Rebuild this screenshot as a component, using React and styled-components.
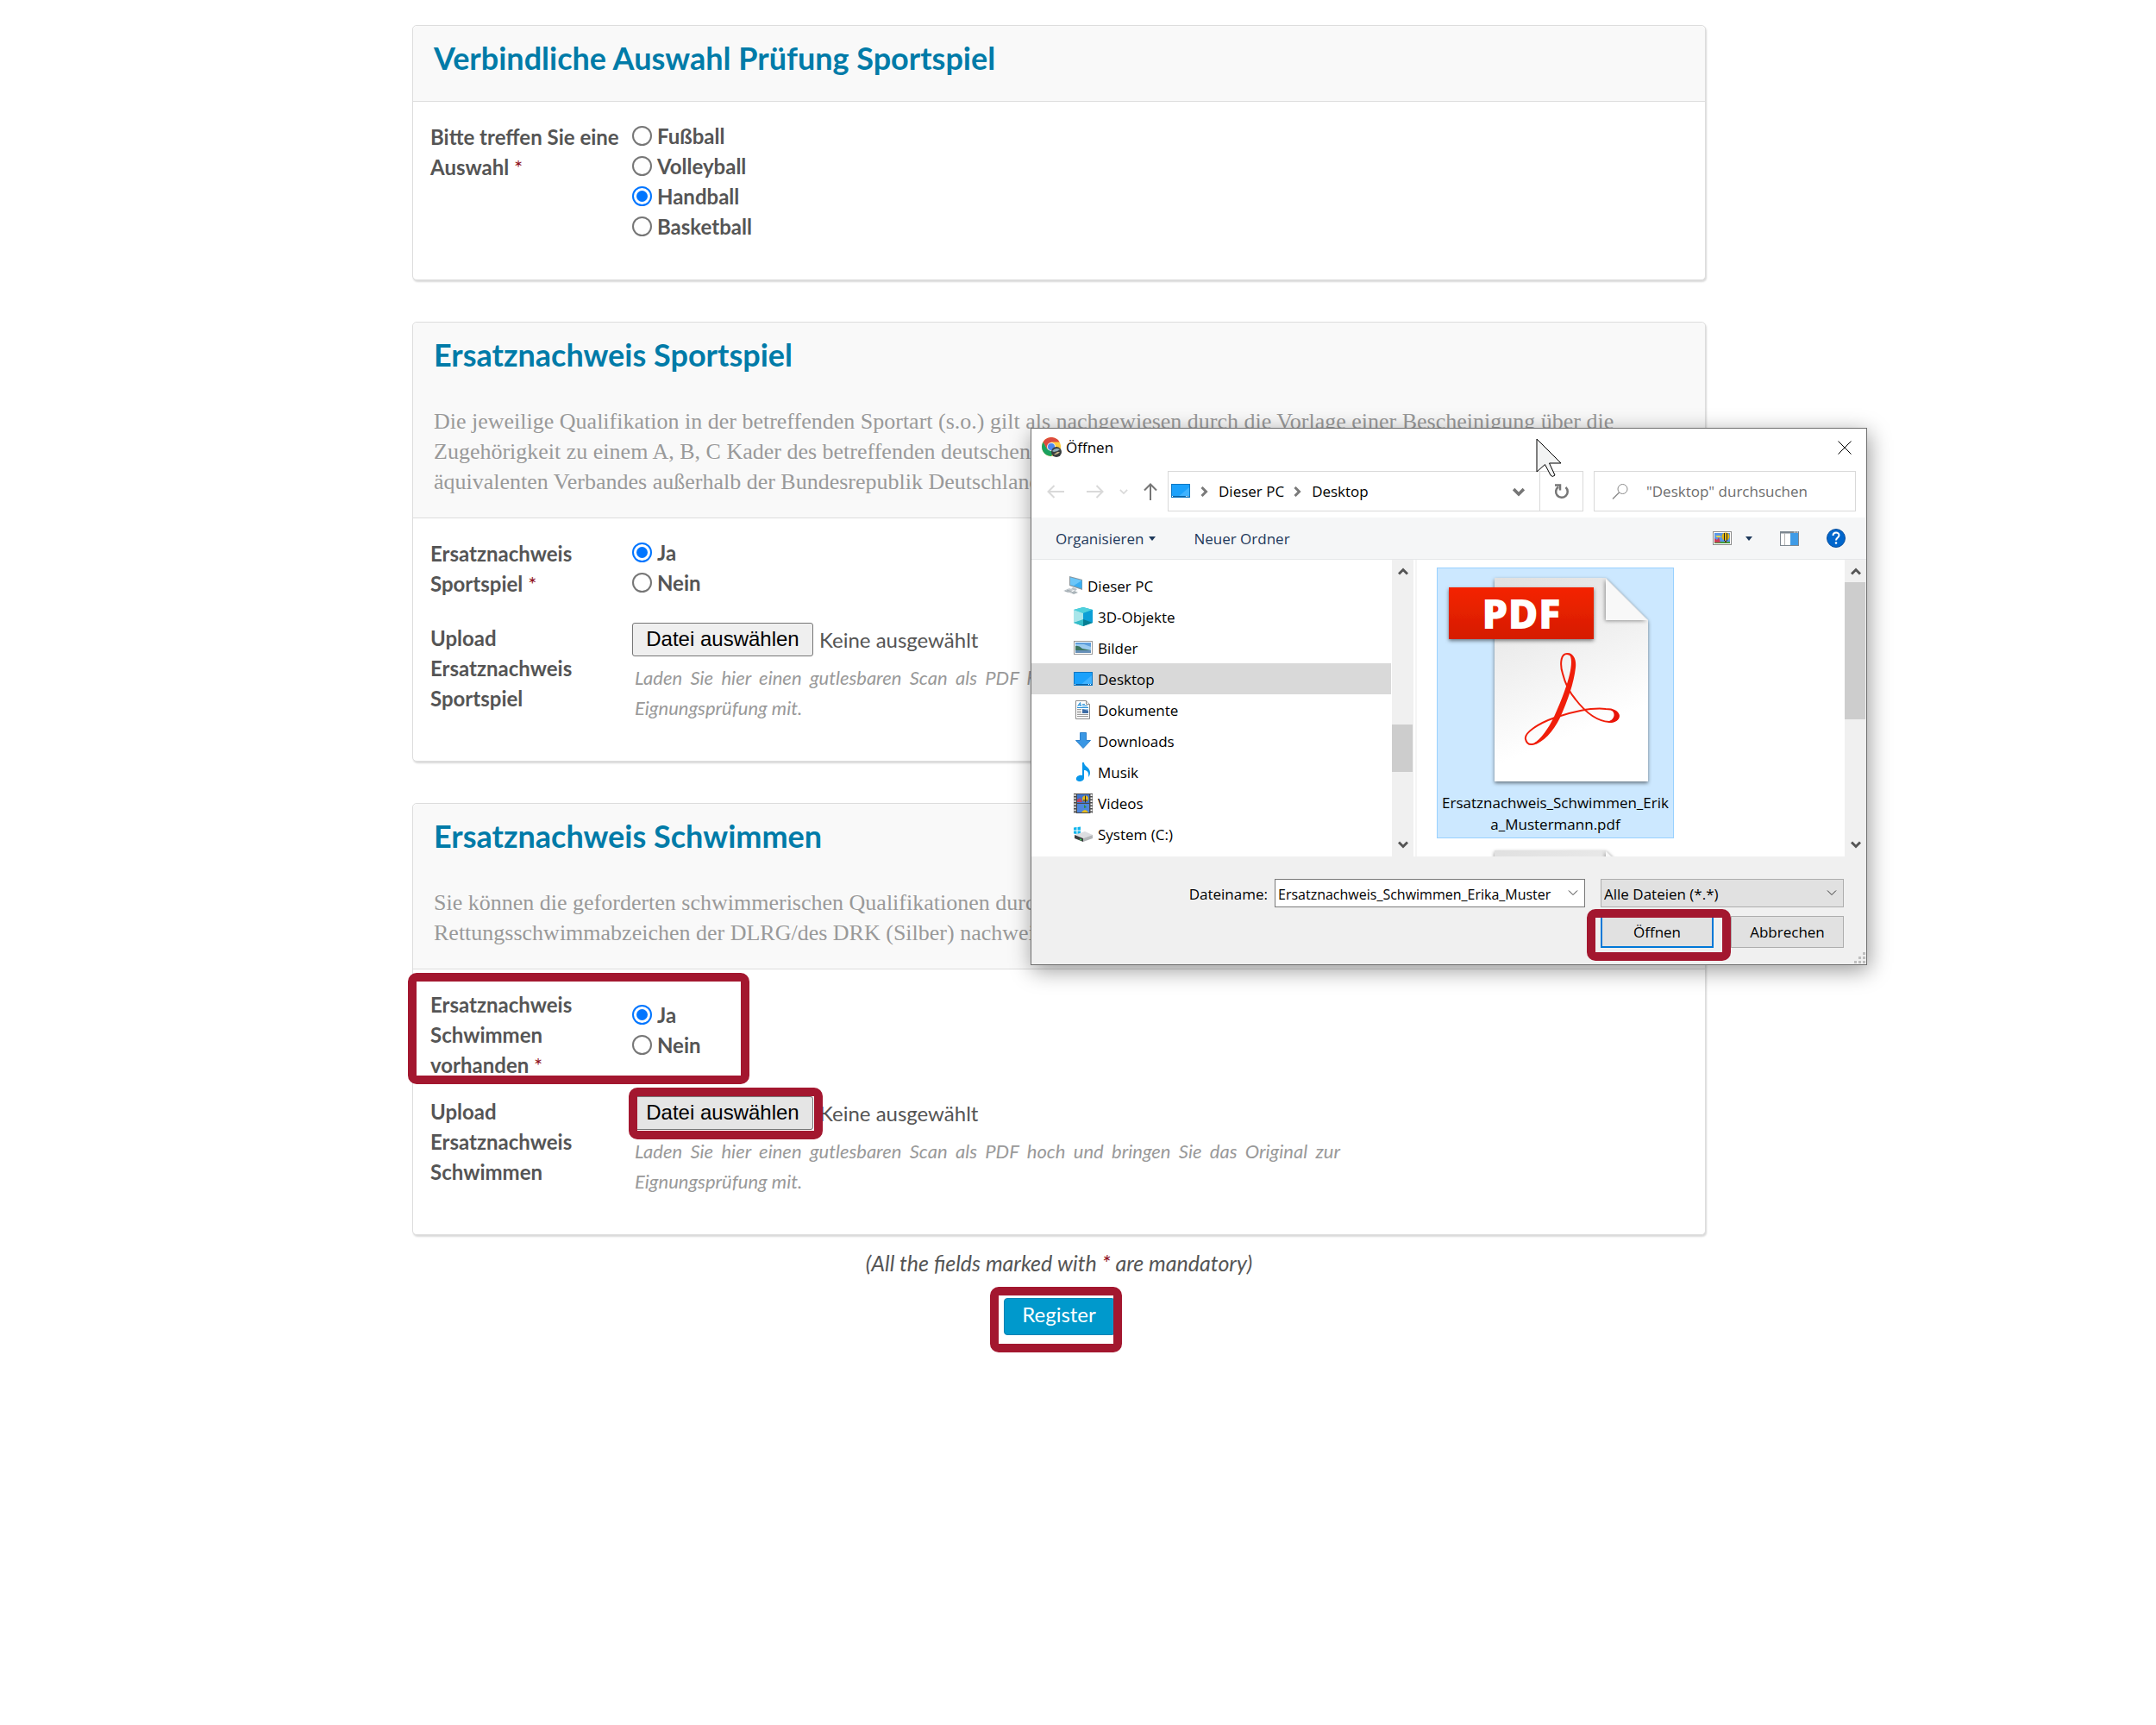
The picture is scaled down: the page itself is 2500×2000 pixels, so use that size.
import React, { useRef, useState } from "react";
import styled, { createGlobalStyle } from "styled-components";

const GlobalStyle = createGlobalStyle`
  * {
    box-sizing: border-box;
  }

  body {
    margin: 0;
    background: #ffffff;
    color: #555555;
    font-family: Lato, "Open Sans", sans-serif;
    font-size: 24px;
    line-height: 35px;
  }

  svg {
    display: block;
    flex-shrink: 0;
  }
`;

const Page = styled.div`
  padding: 29px 44px 64px 0;
`;

const Workspace = styled.form`
  position: relative;
  max-width: 1500px;
  margin: 0 auto;
`;

const Card = styled.section`
  margin-bottom: 48px;
  border: 1px solid #dddddd;
  border-radius: 5px;
  background: #ffffff;
  box-shadow: 1px 2px 2px rgba(0, 0, 0, 0.15);

  &:last-of-type {
    margin-bottom: 15px;
  }
`;

const CardHeader = styled.header`
  min-height: 88px;
  padding: 15px 24px 24px;
  border-bottom: 1px solid #dddddd;
  background: #f9f9f9;
  border-radius: 5px 5px 0 0;
`;

const CardTitle = styled.h2`
  margin: 0;
  color: #007ba8;
  font-size: 36px;
  font-weight: 700;
  line-height: 44px;
`;

const CardText = styled.p`
  margin: 38px 0 0;
  color: #999999;
  font-family: "Liberation Serif", "Times New Roman", serif;
  font-size: 26px;
`;

const CardBody = styled.div`
  padding: 22px 20px 44px;
`;

const FieldRow = styled.div`
  position: relative;
  display: grid;
  grid-template-columns: 224px 1fr;
  column-gap: 10px;
  margin-bottom: ${(props) => props.$space || 0}px;
`;

const FieldLabel = styled.div`
  padding-top: 1px;
  font-weight: 700;
`;

const Required = styled.span`
  color: #8f1020;
  font-weight: 400;
`;

const RadioList = styled.div`
  display: flex;
  flex-direction: column;
  padding-top: ${(props) => (props.$lowered ? 13 : 0)}px;
`;

const RadioOption = styled.label`
  display: flex;
  align-items: center;
  gap: 6px;
  font-weight: 700;
`;

const Radio = styled.input`
  appearance: none;
  display: grid;
  place-content: center;
  width: 23px;
  height: 23px;
  margin: 0;
  border: 2px solid #767676;
  border-radius: 50%;
  background: #ffffff;

  &:checked {
    border-color: #0075ff;
  }

  &:checked::before {
    content: "";
    width: 13px;
    height: 13px;
    border-radius: 50%;
    background: #0075ff;
  }
`;

const FilePicker = styled.div`
  position: relative;
  display: flex;
  align-items: center;
  gap: 7px;
  height: 40px;
`;

const HiddenFile = styled.input`
  display: none;
`;

const FileButton = styled.button`
  width: 210px;
  height: 39px;
  padding: 0;
  border: 1px solid #767676;
  border-radius: 3px;
  background: ${(props) => (props.$hovered ? "#e5e5e5" : "#efefef")};
  color: #000000;
  font-family: "Liberation Sans", Arial, sans-serif;
  font-size: 24px;
`;

const Hint = styled.p`
  max-width: 821px;
  margin: 7px 0 0;
  padding-left: 3px;
  color: #999999;
  font-size: 22px;
  font-style: italic;
  text-align: justify;
`;

// Red marker drawn over the steps the applicant has to follow
const Highlight = styled.div`
  position: absolute;
  top: ${(props) => props.$top}px;
  left: ${(props) => props.$left}px;
  width: ${(props) => props.$width}px;
  height: ${(props) => props.$height}px;
  border: 10px solid #a3172f;
  border-radius: 10px;
  pointer-events: none;
`;

const Footer = styled.footer`
  display: flex;
  flex-direction: column;
  align-items: center;
  gap: 23px;
`;

const Mandatory = styled.p`
  margin: 0;
  font-size: 25px;
  font-style: italic;
`;

const SubmitWrap = styled.div`
  position: relative;
`;

const SubmitButton = styled.button`
  display: block;
  width: 129px;
  height: 43px;
  padding: 0 0 6px;
  border: 1px solid #0082b3;
  border-radius: 4px;
  background: #0099cc;
  color: #ffffff;
  font-family: inherit;
  font-size: 24px;
`;

const Dialog = styled.div`
  position: absolute;
  top: 467px;
  left: 717px;
  width: 970px;
  border: 1px solid #707070;
  background: #ffffff;
  box-shadow: 2px 6px 24px rgba(0, 0, 0, 0.4);
  color: #000000;
  font-family: "Open Sans", "Noto Sans", sans-serif;
  font-size: 17px;
  line-height: 25px;

  button,
  input,
  select {
    font-family: inherit;
    font-size: inherit;
  }
`;

const TitleBar = styled.div`
  display: flex;
  align-items: center;
  gap: 5px;
  height: 43px;
  padding: 0 17px 0 12px;
`;

const IconButton = styled.button`
  display: flex;
  align-items: center;
  justify-content: center;
  padding: 0;
  border: none;
  background: none;
`;

const CloseButton = styled(IconButton)`
  margin-left: auto;
`;

const NavBar = styled.div`
  display: flex;
  align-items: center;
  padding: 6px 12px 7px 18px;
`;

const NavButtons = styled.div`
  display: grid;
  grid-template-columns: 46px 38px 28px 28px;
  justify-items: start;
  align-items: center;
`;

const AddressBar = styled.div`
  display: flex;
  align-items: center;
  flex: 1;
  height: 47px;
  margin-right: 12px;
  padding-left: 3px;
  border: 1px solid #d9d9d9;
`;

const CrumbArrow = styled.span`
  margin: 0 11px 0 9px;
`;

const AddressToggle = styled(IconButton)`
  margin: 0 17px 0 auto;
`;

const RefreshButton = styled(IconButton)`
  width: 50px;
  height: 100%;
  border-left: 1px solid #d9d9d9;
`;

const SearchBox = styled.div`
  display: flex;
  align-items: center;
  gap: 20px;
  width: 304px;
  height: 47px;
  padding-left: 20px;
  border: 1px solid #d9d9d9;
`;

const SearchInput = styled.input`
  flex: 1;
  min-width: 0;
  padding: 0;
  border: none;
  outline: none;

  &::placeholder {
    color: #6d6d6d;
    opacity: 1;
  }
`;

const ToolBar = styled.div`
  display: flex;
  align-items: center;
  height: 49px;
  padding: 0 24px 0 28px;
  border-bottom: 1px solid #e5e7e9;
  background: #f5f6f7;
`;

const ToolButton = styled(IconButton)`
  gap: 6px;
  margin-right: 44px;
  color: #1e395b;
`;

const ToolIcons = styled.div`
  display: flex;
  align-items: center;
  gap: 32px;
  margin-left: auto;
`;

const ViewButton = styled(IconButton)`
  gap: 16px;
`;

const Browser = styled.div`
  display: flex;
  height: 344px;
`;

const Tree = styled.ul`
  width: 417px;
  margin: 0;
  padding: 12px 0 0;
  list-style: none;
  overflow: hidden;
`;

const TreeItem = styled.li`
  display: flex;
  align-items: center;
  gap: 5px;
  height: 36px;
  padding-left: ${(props) => (props.$root ? 37 : 49)}px;
  background: ${(props) => (props.$active ? "#d9d9d9" : "transparent")};
`;

const ScrollBar = styled.div`
  display: flex;
  flex-direction: column;
  align-items: center;
  justify-content: space-between;
  position: relative;
  width: 25px;
  margin-left: 1px;
  padding: 8px 0;
  background: #f0f0f0;
`;

const ScrollThumb = styled.div`
  position: absolute;
  top: ${(props) => props.$top}px;
  left: 0;
  right: 1px;
  height: ${(props) => props.$height}px;
  background: #cdcdcd;
`;

const Files = styled.div`
  display: flex;
  flex-direction: column;
  gap: 2px;
  flex: 1;
  margin-left: 2px;
  padding: 9px 0 0 23px;
  border-left: 2px solid #f5f5f5;
  overflow: hidden;
`;

const FileTile = styled.div`
  flex-shrink: 0;
  width: 275px;
  height: 314px;
  padding: 7px 4px;
  border: 1px solid ${(props) => (props.$selected ? "#99d1ff" : "transparent")};
  background: ${(props) => (props.$selected ? "#cce8ff" : "transparent")};
  text-align: center;
  word-break: break-all;
`;

const DialogFooter = styled.div`
  position: relative;
  display: grid;
  grid-template-columns: 1fr 360px 282px;
  column-gap: 18px;
  row-gap: 10px;
  padding: 26px 26px 19px 0;
  background: #f0f0f0;
`;

const NameLabel = styled.label`
  margin-right: -10px;
  padding-top: 5px;
  text-align: right;
`;

const Combo = styled.div`
  position: relative;
  height: 33px;

  svg {
    position: absolute;
    top: 10px;
    right: 8px;
    pointer-events: none;
  }
`;

const NameInput = styled.input`
  width: 100%;
  height: 100%;
  padding: 2px 26px 0 3px;
  border: 1px solid #7a7a7a;
  background: #ffffff;
  color: #000000;

  && {
    font-size: 16px;
  }
`;

const TypeSelect = styled.select`
  appearance: none;
  width: 100%;
  height: 100%;
  padding: 1px 26px 0 3px;
  border: 1px solid #adadad;
  border-radius: 0;
  background: #e1e1e1;
  color: #000000;
`;

const Actions = styled.div`
  position: relative;
  grid-column: 3;
  display: flex;
  justify-content: space-between;
`;

const ActionButton = styled.button`
  width: 131px;
  height: 37px;
  padding: 0;
  border: ${(props) =>
    props.$primary ? "2px solid #0078d7" : "1px solid #adadad"};
  background: #e1e1e1;
  color: #000000;
`;

const Grip = styled.div`
  position: absolute;
  right: 1px;
  bottom: 1px;
`;

const Pointer = styled.div`
  position: absolute;
  top: 11px;
  left: 585px;
  pointer-events: none;
`;

const Chevron = ({ dir = "down", size = 12, color = "#555", width = 2 }) => {
  const paths = {
    down: "M1 3.5 6 8.5 11 3.5",
    up: "M1 8.5 6 3.5 11 8.5",
    right: "M3.5 1 8.5 6 3.5 11"
  };
  return (
    <svg width={size} height={size} viewBox="0 0 12 12" fill="none">
      <path d={paths[dir]} stroke={color} strokeWidth={width} />
    </svg>
  );
};

const Caret = () => (
  <svg width="8" height="5" viewBox="0 0 8 5">
    <path d="M0 0h8L4 5z" fill="#1e395b" />
  </svg>
);

const ChromeIcon = () => (
  <svg width="23" height="23" viewBox="0 0 23 23">
    <circle cx="11" cy="11" r="11" fill="#ffcd40" />
    <path d="M1.5 5.5A11 11 0 0 1 20.6 5.5H11L6.3 13.8z" fill="#dd4b3e" />
    <path d="M1.5 5.5A11 11 0 0 0 11 22l4.7-8.2H6.3z" fill="#1aa15f" />
    <circle cx="11" cy="11" r="5" fill="#f1f1f1" />
    <circle cx="11" cy="11" r="4" fill="#4a87ee" />
    <circle cx="17" cy="17" r="6" fill="#3a3f40" />
    <path d="M12 16q4-5 9-2l-3 2-4 1z" fill="#8fb0bd" />
    <path d="M14 20q4 1 7-3l-3 0z" fill="#c9b58b" />
  </svg>
);

const DesktopIcon = () => (
  <svg width="23" height="17" viewBox="0 0 23 17">
    <rect x="0.5" y="0.5" width="21" height="15" fill="#1ba1fb" stroke="#0f78c4" />
    <path d="M8 15 21 4v11z" fill="#3fb2ff" />
    <path d="M1 14.5h20" stroke="#0b62a4" />
    <path d="M1 14.5h1M17 14.5h1M19 14.5h1" stroke="#fff" />
  </svg>
);

const PcIcon = () => (
  <svg width="23" height="22" viewBox="0 0 23 22">
    <path d="M7 0 22 4v12L7 11z" fill="#8a979f" />
    <path d="M8 1.5 21.5 5v9.5L8 10z" fill="#3aaef2" />
    <path d="M8 1.5 21.5 5 12 11 8 10z" fill="#6cc6f8" />
    <path d="M11 13l5 2-2 2-5-2z" fill="#b9c2c8" />
    <path d="M0 17l7-3 5 2-7 3z" fill="#c5ccd1" />
    <path d="M8 19l5-2 4 2-5 2z" fill="#aab4ba" />
    <path d="M2 17l7 2M4 16l6 2" stroke="#8f9aa1" strokeWidth="0.7" />
  </svg>
);

const CubeIcon = () => (
  <svg width="23" height="22" viewBox="0 0 23 22">
    <path d="M11 0 22 3v15l-11 4L0 18V3z" fill="#17b5cf" />
    <path d="M11 0 22 3 11 7 0 3z" fill="#4fd0dc" />
    <path d="M0 3l11 4v8L0 18z" fill="#a9e6ea" />
    <path d="M0 18l11-4v8z" fill="#36bdc9" />
    <path d="M22 3 11 7v8l11 3z" fill="#0c9fd6" />
    <path d="M11 14l11 4-11 4z" fill="#067e93" />
  </svg>
);

const ImageIcon = () => (
  <svg width="23" height="16" viewBox="0 0 23 16">
    <rect x="0.5" y="0.5" width="21" height="15" fill="#fff" stroke="#999" />
    <rect x="2" y="2" width="18" height="12" fill="#9ccbf0" />
    <path d="M2 4h10l8 3V2H2z" fill="#5f9fdd" />
    <path d="M2 6q4-1 8 3l10 2v1H2z" fill="#3c7560" />
    <path d="M2 11h18v3H2z" fill="#6790b8" />
  </svg>
);

const DocIcon = () => (
  <svg width="23" height="22" viewBox="0 0 23 22">
    <path d="M2.5.5h12l4 4v17h-16z" fill="#fff" stroke="#8b8b8b" />
    <path d="M14.5.5v4h4" fill="#eee" stroke="#8b8b8b" />
    <path d="M4.5 7 7.5 2.5 8.5 7M5.5 5.5h3" fill="none" stroke="#1c8ad6" />
    <path d="M10 4.5h3M10 6.5h6M4 8.5h13" stroke="#1c8ad6" />
    <path d="M4 10.5h5M4 12.5h5M4 14.5h5M4 16.5h13M4 18.5h13" stroke="#999" />
    <rect x="10" y="10" width="7" height="5" fill="#3f6da5" />
    <path d="M10 10h7v2z" fill="#9cc4ea" />
  </svg>
);

const DownloadIcon = () => (
  <svg width="23" height="22" viewBox="0 0 23 22">
    <path
      d="M7.5 1.5h7v9h5L11 19.5 2.5 10.5h5z"
      fill="#3a97e4"
      stroke="#2a80cc"
    />
  </svg>
);

const MusicIcon = () => (
  <svg width="23" height="22" viewBox="0 0 23 22">
    <path
      d="M10 0h2c0 5 7 5 7 12 0 2-1 4-2 5 1-6-2-8-5-8v9c0 5-8 5-9 2-1-4 4-6 7-5z"
      fill="#0a97ea"
    />
  </svg>
);

const VideoIcon = () => (
  <svg width="23" height="23" viewBox="0 0 23 23">
    <rect width="22" height="23" fill="#4b4b4b" />
    <path
      d="M1.5 1v22M20.5 1v22"
      stroke="#fff"
      strokeWidth="2"
      strokeDasharray="2 1.5"
    />
    <rect x="4" y="1" width="14" height="10" fill="#3f74cf" />
    <rect x="4" y="12" width="14" height="10" fill="#4e86dd" />
    <circle cx="13.5" cy="6" r="3.5" fill="#e5b81e" />
    <path d="M13.5 2.5v8M11 8h5" stroke="#2b2b20" />
    <path d="M4 7l4-2 2 5H4z" fill="#c2435d" />
    <path d="M9 22q4-6 8 0z" fill="#e8bd1b" />
    <path d="M12 13l3 3-3 1z" fill="#2d8f3d" />
  </svg>
);

const DriveIcon = () => (
  <svg width="23" height="20" viewBox="0 0 23 20">
    <path
      d="M0 2.5 3.5 2v3.5H0zM4.5 2 8 1.5v4H4.5zM0 6.5h3.5V10L0 9.5zM4.5 6.5H8v4L4.5 10z"
      fill="#12b5ec"
    />
    <path d="M1 11 13 7l9 4-11 4z" fill="#dcdde0" />
    <path d="M11 15l11-4v4l-11 4z" fill="#b3b5b8" />
    <path d="M1 11l10 4v4L1 15z" fill="#3b3d40" />
    <path d="M7 16l2 1" stroke="#39d353" strokeWidth="1.5" />
  </svg>
);

const ViewIcon = () => (
  <svg width="22" height="16" viewBox="0 0 22 16">
    <rect x="0.5" y="0.5" width="21" height="15" fill="#fff" stroke="#8c8c8c" />
    <rect x="2" y="2" width="18" height="12" fill="#5a96e8" />
    <path d="M2 12h18v2H2z" fill="#3f9c3f" />
    <path d="M2 8l3 2 2-3 2 6H2z" fill="#c93f57" />
    <path d="M3 5h5l2 2H5z" fill="#e8d64a" />
    <circle cx="15" cy="6" r="4.5" fill="#e5b70d" />
    <path d="M13.5 2v9M16.5 2v9" stroke="#222" />
    <rect x="14" y="11" width="2" height="2" fill="#6b3d12" />
  </svg>
);

const PaneIcon = () => (
  <svg width="22" height="17" viewBox="0 0 22 17">
    <rect x="0.5" y="0.5" width="21" height="16" fill="#fff" stroke="#7d8790" />
    <path d="M0 1.5h22" stroke="#7d8790" strokeWidth="2" />
    <path d="M16 1h1M18 1h1M20 1h1" stroke="#fff" />
    <path d="M5.5 2v14" stroke="#b5b5b5" />
    <rect x="12" y="2" width="9" height="14" fill="#3f9be6" />
  </svg>
);

const HelpIcon = () => (
  <svg width="22" height="22" viewBox="0 0 22 22">
    <circle cx="11" cy="11" r="10.5" fill="#0066cc" stroke="#0a4f9c" />
    <path
      d="M7.5 8c0-4.5 7-4.5 7-.5 0 3-3.5 3-3.5 6"
      fill="none"
      stroke="#fff"
      strokeWidth="2"
    />
    <circle cx="11" cy="16.5" r="1.3" fill="#fff" />
  </svg>
);

const FileIcon = ({ children }) => (
  <svg width="265" height="252" viewBox="-4 0 265 252">
    <defs>
      <linearGradient id="sheet" x1="0" y1="0" x2="0.3" y2="1">
        <stop offset="0" stopColor="#e0e0e0" />
        <stop offset="0.5" stopColor="#f2f2f2" />
        <stop offset="0.85" stopColor="#ffffff" />
      </linearGradient>
      <linearGradient id="banner" x1="0" y1="0" x2="0" y2="1">
        <stop offset="0" stopColor="#f42400" />
        <stop offset="1" stopColor="#d51c00" />
      </linearGradient>
      <filter id="drop" x="-20%" y="-20%" width="140%" height="150%">
        <feDropShadow dx="0" dy="2" stdDeviation="2" floodOpacity="0.5" />
      </filter>
      <filter id="fold" x="-20%" y="-20%" width="140%" height="150%">
        <feDropShadow dx="-1" dy="1" stdDeviation="2" floodOpacity="0.4" />
      </filter>
    </defs>
    <path d="M58 4h129l49 49v187H58z" fill="url(#sheet)" filter="url(#drop)" />
    <path d="M187 5l48 48h-48z" fill="#f8f8f8" filter="url(#fold)" />
    {children}
  </svg>
);

const PdfIcon = () => (
  <FileIcon>
    <rect
      x="5"
      y="15"
      width="168"
      height="60"
      fill="url(#banner)"
      filter="url(#drop)"
    />
    <text
      x="89"
      y="63"
      textAnchor="middle"
      fontFamily="Open Sans, sans-serif"
      fontWeight="800"
      fontSize="48"
      fill="#fff"
    >
      PDF
    </text>
    <path
      d="M142 92C134 92 134 106 137 115C140 127 146 138 152 145C162 158 175 170 191 171C206 171 206 156 187 156C170 154 145 160 128 166C108 173 92 184 94 191C96 200 105 198 112 191C128 174 138 148 144 127C149 110 153 92 142 92"
      fill="none"
      stroke="#f01e0a"
      strokeWidth="2"
    />
    <path
      d="M142 91C150 91 153 99 152 108C150 126 143 146 134 166C125 184 112 198 99 198C108 196 120 180 127 165C137 143 142 128 145 116C148 104 148 92 142 91Z"
      fill="#f01e0a"
    />
    <path
      d="M190 156C199 158 199 168 189 171C206 174 208 157 190 156Z"
      fill="#e8140a"
    />
  </FileIcon>
);

const sports = ["Fußball", "Volleyball", "Handball", "Basketball"];
const yesNo = ["Ja", "Nein"];

const treeItems = [
  { name: "Dieser PC", icon: PcIcon, root: true },
  { name: "3D-Objekte", icon: CubeIcon },
  { name: "Bilder", icon: ImageIcon },
  { name: "Desktop", icon: DesktopIcon, active: true },
  { name: "Dokumente", icon: DocIcon },
  { name: "Downloads", icon: DownloadIcon },
  { name: "Musik", icon: MusicIcon },
  { name: "Videos", icon: VideoIcon },
  { name: "System (C:)", icon: DriveIcon }
];

function RadioField({ label, name, options, initial, space, lowered, children }) {
  const [value, setValue] = useState(initial);

  return (
    <FieldRow
      role="radiogroup"
      aria-labelledby={`${name}-label`}
      $space={space}
    >
      <FieldLabel id={`${name}-label`}>
        {label} <Required>*</Required>
      </FieldLabel>
      <RadioList $lowered={lowered}>
        {options.map((option) => (
          <RadioOption key={option}>
            <Radio
              type="radio"
              name={name}
              checked={value === option}
              onChange={() => setValue(option)}
            />
            {option}
          </RadioOption>
        ))}
      </RadioList>
      {children}
    </FieldRow>
  );
}

function UploadField({ label, name, hovered, children }) {
  const fileRef = useRef(null);

  return (
    <FieldRow>
      <FieldLabel as="label" htmlFor={name}>
        {label}
      </FieldLabel>
      <div>
        <FilePicker>
          <HiddenFile ref={fileRef} type="file" tabIndex={-1} />
          <FileButton
            id={name}
            type="button"
            $hovered={hovered}
            onClick={() => fileRef.current.click()}
          >
            Datei auswählen
          </FileButton>
          <span>Keine ausgewählt</span>
          {children}
        </FilePicker>
        <Hint>
          Laden Sie hier einen gutlesbaren Scan als PDF hoch und bringen Sie das
          Original zur Eignungsprüfung mit.
        </Hint>
      </div>
    </FieldRow>
  );
}

function OpenDialog() {
  return (
    <Dialog role="dialog" aria-label="Öffnen">
      <TitleBar>
        <ChromeIcon />
        <span>Öffnen</span>
        <CloseButton type="button" aria-label="Schließen">
          <svg width="16" height="16" viewBox="0 0 16 16">
            <path d="M0.5 0.5l15 15M15.5 0.5l-15 15" stroke="#000" />
          </svg>
        </CloseButton>
      </TitleBar>

      <NavBar>
        <NavButtons>
          <IconButton type="button" aria-label="Zurück">
            <svg width="20" height="16" viewBox="0 0 20 16" fill="none">
              <path d="M20 8H2M8.5 1 1.5 8l7 7" stroke="#d9d9d9" strokeWidth="2" />
            </svg>
          </IconButton>
          <IconButton type="button" aria-label="Vorwärts">
            <svg width="20" height="16" viewBox="0 0 20 16" fill="none">
              <path d="M0 8h18M11.5 1l7 7-7 7" stroke="#d9d9d9" strokeWidth="2" />
            </svg>
          </IconButton>
          <IconButton type="button" aria-label="Verlauf">
            <Chevron size={10} color="#d9d9d9" />
          </IconButton>
          <IconButton type="button" aria-label="Nach oben">
            <svg width="16" height="20" viewBox="0 0 16 20" fill="none">
              <path d="M8 20V2M1 8.5 8 1.5l7 7" stroke="#767676" strokeWidth="2" />
            </svg>
          </IconButton>
        </NavButtons>
        <AddressBar>
          <DesktopIcon />
          <CrumbArrow>
            <Chevron dir="right" color="#7a7a7a" width={3} />
          </CrumbArrow>
          <span>Dieser PC</span>
          <CrumbArrow>
            <Chevron dir="right" color="#7a7a7a" width={3} />
          </CrumbArrow>
          <span>Desktop</span>
          <AddressToggle type="button" aria-label="Vorherige Orte">
            <Chevron size={14} color="#767676" width={3} />
          </AddressToggle>
          <RefreshButton type="button" aria-label="Aktualisieren">
            <svg width="18" height="18" viewBox="0 0 18 18" fill="none">
              <path
                d="M5 3.5A6.8 6.8 0 1 0 13.5 4"
                stroke="#767676"
                strokeWidth="2.5"
              />
              <path d="M1 1.5h6v6" stroke="#767676" strokeWidth="2.5" />
            </svg>
          </RefreshButton>
        </AddressBar>
        <SearchBox>
          <svg width="20" height="20" viewBox="0 0 20 20" fill="none">
            <circle cx="12.5" cy="7" r="5.5" stroke="#8a8a8a" />
            <path d="M8.5 11 1 18.5" stroke="#8a8a8a" strokeWidth="1.5" />
          </svg>
          <SearchInput
            aria-label="Suchen"
            placeholder={'"Desktop" durchsuchen'}
          />
        </SearchBox>
      </NavBar>

      <ToolBar>
        <ToolButton type="button">
          Organisieren
          <Caret />
        </ToolButton>
        <ToolButton type="button">Neuer Ordner</ToolButton>
        <ToolIcons>
          <ViewButton type="button" aria-label="Ansicht">
            <ViewIcon />
            <Caret />
          </ViewButton>
          <IconButton type="button" aria-label="Vorschaufenster">
            <PaneIcon />
          </IconButton>
          <IconButton type="button" aria-label="Hilfe">
            <HelpIcon />
          </IconButton>
        </ToolIcons>
      </ToolBar>

      <Browser>
        <Tree>
          {treeItems.map(({ name, icon: Icon, root, active }) => (
            <TreeItem key={name} $root={root} $active={active}>
              <Icon />
              {name}
            </TreeItem>
          ))}
        </Tree>
        <ScrollBar>
          <Chevron dir="up" width={3} />
          <ScrollThumb $top={191} $height={55} />
          <Chevron width={3} />
        </ScrollBar>
        <Files>
          <FileTile $selected>
            <PdfIcon />
            Ersatznachweis_Schwimmen_Erika_Mustermann.pdf
          </FileTile>
          <FileTile>
            <FileIcon />
          </FileTile>
        </Files>
        <ScrollBar>
          <Chevron dir="up" width={3} />
          <ScrollThumb $top={26} $height={159} />
          <Chevron width={3} />
        </ScrollBar>
      </Browser>

      <DialogFooter>
        <NameLabel htmlFor="filename">Dateiname:</NameLabel>
        <Combo>
          <NameInput
            id="filename"
            defaultValue="Ersatznachweis_Schwimmen_Erika_Muster"
          />
          <Chevron color="#333" width={1} />
        </Combo>
        <Combo>
          <TypeSelect aria-label="Dateityp">
            <option>Alle Dateien (*.*)</option>
          </TypeSelect>
          <Chevron color="#333" width={1} />
        </Combo>
        <Actions>
          <ActionButton type="button" $primary>
            Öffnen
          </ActionButton>
          <ActionButton type="button">Abbrechen</ActionButton>
          <Highlight $top={-8} $left={-16} $width={167} $height={60} />
        </Actions>
        <Grip>
          <svg width="13" height="13" viewBox="0 0 13 13" fill="#bfbfbf">
            <path d="M10 0h3v3h-3zM5 5h3v3H5zM10 5h3v3h-3zM0 10h3v3H0zM5 10h3v3H5zM10 10h3v3h-3z" />
          </svg>
        </Grip>
      </DialogFooter>

      <Pointer>
        <svg width="30" height="46" viewBox="-1 -1 30 46">
          <path
            d="M0 0V38L9.5 29.5 16 42q2 3 5 0L14.5 28H28z"
            fill="#f2f3f3"
            stroke="#000"
          />
        </svg>
      </Pointer>
    </Dialog>
  );
}

function App() {
  return (
    <Page>
      <GlobalStyle />
      <Workspace onSubmit={(event) => event.preventDefault()}>
        <Card>
          <CardHeader>
            <CardTitle>Verbindliche Auswahl Prüfung Sportspiel</CardTitle>
          </CardHeader>
          <CardBody>
            <RadioField
              label="Bitte treffen Sie eine Auswahl"
              name="sport"
              options={sports}
              initial="Handball"
            />
          </CardBody>
        </Card>

        <Card>
          <CardHeader>
            <CardTitle>Ersatznachweis Sportspiel</CardTitle>
            <CardText>
              Die jeweilige Qualifikation in der betreffenden Sportart (s.o.)
              gilt als nachgewiesen durch die Vorlage einer Bescheinigung über
              die
              <br />
              Zugehörigkeit zu einem A, B, C Kader des betreffenden deutschen
              <br />
              äquivalenten Verbandes außerhalb der Bundesrepublik Deutschland
            </CardText>
          </CardHeader>
          <CardBody>
            <RadioField
              label="Ersatznachweis Sportspiel"
              name="proof-sport"
              options={yesNo}
              initial="Ja"
              space={27}
            />
            <UploadField
              label="Upload Ersatznachweis Sportspiel"
              name="upload-sport"
            />
          </CardBody>
        </Card>

        <Card>
          <CardHeader>
            <CardTitle>Ersatznachweis Schwimmen</CardTitle>
            <CardText>
              Sie können die geforderten schwimmerischen Qualifikationen durch
              <br />
              Rettungsschwimmabzeichen der DLRG/des DRK (Silber) nachweisen
            </CardText>
          </CardHeader>
          <CardBody>
            <RadioField
              label="Ersatznachweis Schwimmen vorhanden"
              name="proof-swim"
              options={yesNo}
              initial="Ja"
              space={18}
              lowered
            >
              <Highlight $top={-18} $left={-26} $width={396} $height={129} />
            </RadioField>
            <UploadField
              label="Upload Ersatznachweis Schwimmen"
              name="upload-swim"
              hovered
            >
              <Highlight $top={-9} $left={-4} $width={225} $height={60} />
            </UploadField>
          </CardBody>
        </Card>

        <Footer>
          <Mandatory>
            (All the fields marked with <Required>*</Required> are mandatory)
          </Mandatory>
          <SubmitWrap>
            <SubmitButton type="submit">Register</SubmitButton>
            <Highlight $top={-13} $left={-16} $width={153} $height={76} />
          </SubmitWrap>
        </Footer>

        <OpenDialog />
      </Workspace>
    </Page>
  );
}

export default App;
